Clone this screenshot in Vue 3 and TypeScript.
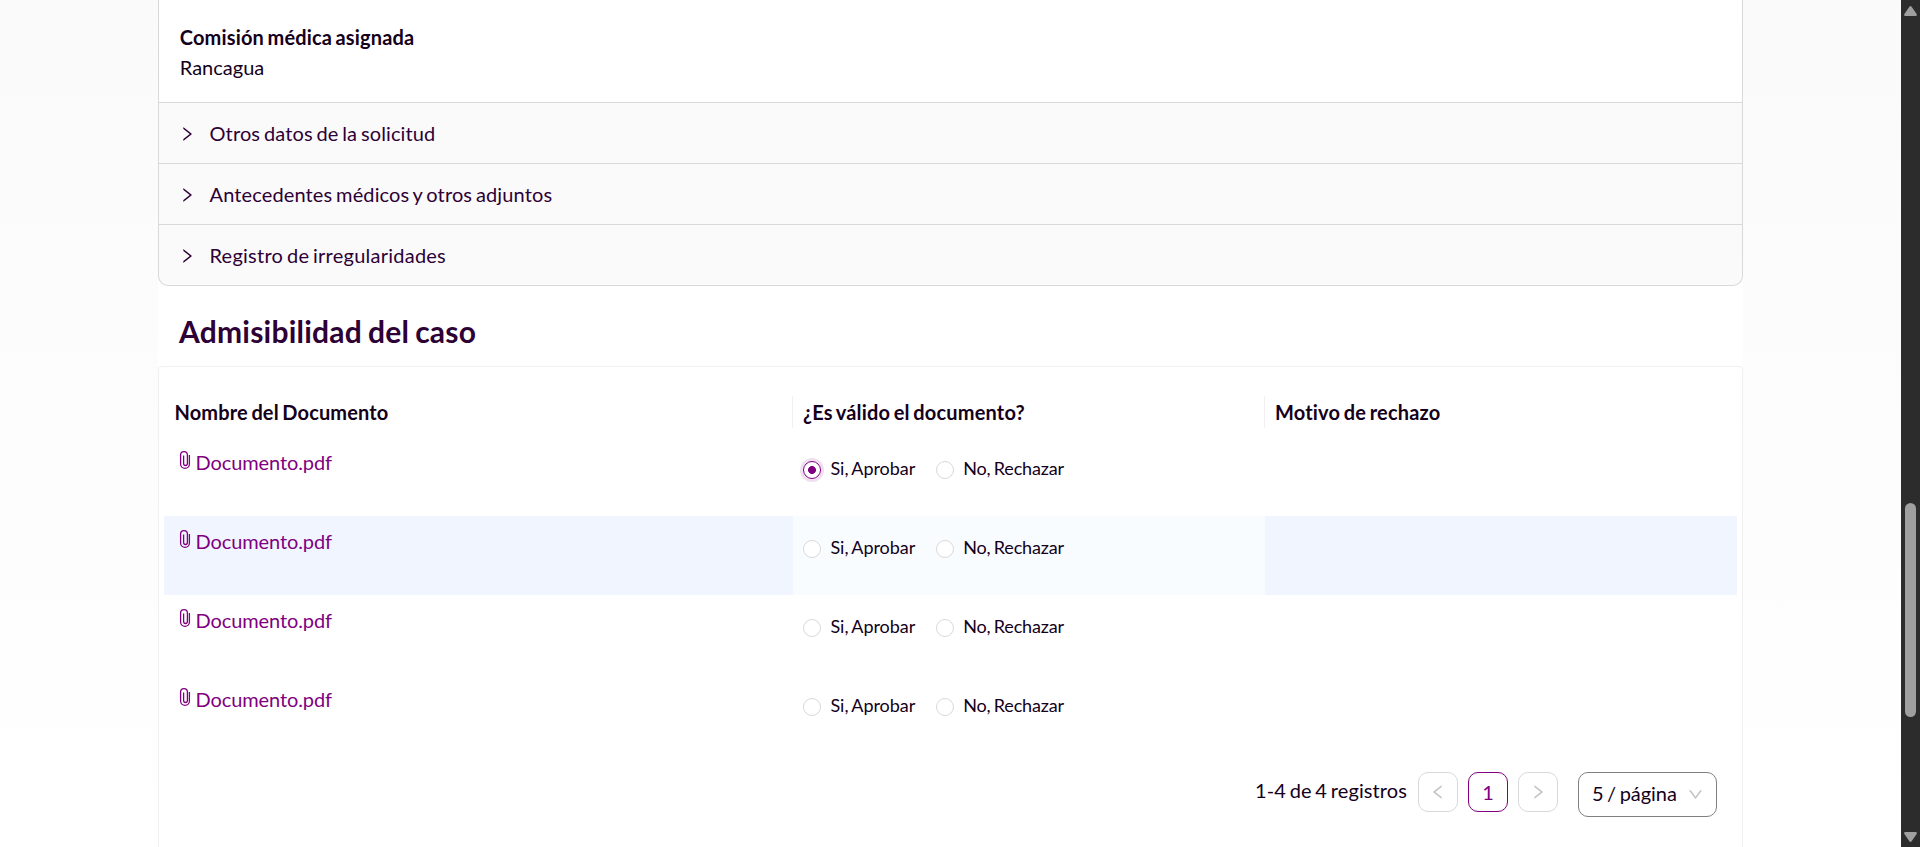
<script setup lang="ts">
import { ref } from 'vue'

interface Row { id: number; choice: string }

const sections: string[] = [
  'Otros datos de la solicitud',
  'Antecedentes médicos y otros adjuntos',
  'Registro de irregularidades',
]
const options: string[] = ['Si, Aprobar', 'No, Rechazar']
const highlighted = 2
const rows = ref<Row[]>([
  { id: 1, choice: 'Si, Aprobar' },
  { id: 2, choice: '' },
  { id: 3, choice: '' },
  { id: 4, choice: '' },
])

const arrow =
  'M765.7 486.8L314.9 134.7A7.97 7.97 0 00302 141v77.3c0 4.9 2.3 9.6 6.1 12.6l360 281.1-360 281.1c-3.9 3-6.1 7.7-6.1 12.6V883c0 6.7 7.7 10.4 12.9 6.3l450.8-352.1a31.96 31.96 0 000-50.4z'
const down =
  'M884 256h-75c-5.1 0-9.9 2.5-12.9 6.6L512 654.2 227.9 262.6c-3-4.1-7.8-6.6-12.9-6.6h-75c-6.5 0-10.3 7.4-6.5 12.7l352.6 486.1c12.8 17.6 39 17.6 51.7 0l352.6-486.1c3.9-5.3.1-12.7-6.4-12.7z'
</script>

<template>
  <div class="page">
    <main class="content">
      <div class="collapse">
        <div class="panel">
          <strong>Comisión médica asignada</strong>
          <span>Rancagua</span>
        </div>
        <div v-for="s in sections" :key="s" class="section">
          <svg class="arrow" viewBox="0 0 1024 1024"><path :d="arrow" /></svg>
          <span>{{ s }}</span>
        </div>
      </div>

      <h2 class="title">Admisibilidad del caso</h2>

      <section class="card">
        <div class="grid head">
          <div class="th">Nombre del Documento</div>
          <div class="th">¿Es válido el documento?</div>
          <div class="th">Motivo de rechazo</div>
        </div>
        <div v-for="r in rows" :key="r.id" class="grid row" :class="{ active: r.id === highlighted }">
          <div class="doc">
            <svg class="clip" viewBox="0 0 10 18">
              <path d="M9.4 3.9V12.9a4.4 4.4 0 0 1-8.8 0V4a3.4 3.4 0 0 1 6.8 0v8.6a1.9 1.9 0 0 1-3.8 0V4.6" />
            </svg>
            <a>Documento.pdf</a>
          </div>
          <div class="choices">
            <label v-for="o in options" :key="o" class="choice" @click="r.choice = o">
              <i class="radio" :class="{ on: r.choice === o }"></i>
              <span>{{ o }}</span>
            </label>
          </div>
          <div class="reason"></div>
        </div>

        <footer class="pager">
          <span class="total">1-4 de 4 registros</span>
          <button class="pg"><svg class="arrow flip" viewBox="0 0 1024 1024"><path :d="arrow" /></svg></button>
          <button class="pg current">1</button>
          <button class="pg"><svg class="arrow" viewBox="0 0 1024 1024"><path :d="arrow" /></svg></button>
          <div class="size">
            <span>5 / página</span>
            <svg class="down" viewBox="0 0 1024 1024"><path :d="down" /></svg>
          </div>
        </footer>
      </section>
    </main>

    <aside class="scrollbar">
      <svg class="tri" viewBox="0 0 13 10"><path d="M5.2 1Q6.5-.8 7.8 1L12.6 8Q13.4 10 11.6 10H1.4Q-.4 10 .4 8Z" /></svg>
      <div class="thumb"></div>
      <svg class="tri" viewBox="0 0 13 10"><path d="M5.2 9Q6.5 10.8 7.8 9L12.6 2Q13.4 0 11.6 0H1.4Q-.4 0 .4 2Z" /></svg>
    </aside>
  </div>
</template>

<style>
body { margin: 0; overflow: hidden; }
</style>

<style scoped>
* { box-sizing: border-box; }
.page {
  display: flex;
  height: 847px;
  overflow: hidden;
  background: linear-gradient(#fafafa, #fff);
  color: #14001a;
  font: 20px/30px Lato, sans-serif;
  word-spacing: -1.5px;
}
.content { width: 1585px; margin-left: 158px; background: #fff; }
.collapse {
  height: 286px;
  border: 1px solid #d9d9d9;
  border-top: 0;
  border-radius: 0 0 10px 10px;
  background: #fafafa;
  overflow: hidden;
}
.panel {
  display: flex;
  flex-direction: column;
  height: 102px;
  padding: 22px 21px 0 20.8px;
  background: #fff;
}
.panel strong { font-weight: 700; letter-spacing: 0.15px; }
.section {
  display: flex;
  align-items: center;
  gap: 14px;
  height: 61px;
  padding-left: 18.5px;
  border-top: 1px solid #d9d9d9;
  color: #2d0036;
  letter-spacing: 0.13px;
}
.section:last-child { letter-spacing: 0.24px; }
.section .arrow { margin-top: 2px; }
.arrow { width: 18px; height: 18px; fill: currentColor; }
.flip { transform: scaleX(-1); }
.title {
  height: 80px;
  margin: 0;
  padding: 25px 0 0 21px;
  font-size: 30px;
  line-height: 40px;
  font-weight: 700;
  letter-spacing: 0.22px;
  color: #2d0036;
}
.card {
  height: 520px;
  padding: 29px 5px 0;
  border: 1px solid #f0f0f0;
  border-radius: 4px;
}
.grid { display: grid; grid-template-columns: 629px 472px 472px; }
.head { height: 41px; font-weight: 700; letter-spacing: 0.18px; }
.th { height: 32px; padding-left: 10px; line-height: 32px; }
.th:first-child { padding-left: 10.5px; letter-spacing: 0.14px; }
.th:not(:last-child) { border-right: 1px solid #f0f0f0; }
.row { height: 79px; }
.doc { display: flex; padding: 10px 0 0 16px; color: #800080; }
.doc a { letter-spacing: -0.1px; }
.clip { width: 10px; height: 18px; margin: 4px 5.5px 0 0; fill: none; stroke: currentColor; stroke-width: 1.3; overflow: visible; }
.choices { display: flex; gap: 20.5px; padding: 19px 0 0 10px; font-size: 18px; line-height: 24px; word-spacing: -1px; }
.choice { display: flex; gap: 9.5px; height: 24px; letter-spacing: -0.06px; }
.choice:last-child { letter-spacing: -0.18px; }
.radio { width: 18px; height: 18px; margin-top: 5px; border: 1px solid #d9d9d9; border-radius: 50%; background: #fff; }
.radio.on {
  border-color: #800080;
  background: radial-gradient(circle, #800080 3.6px, #fff 4.3px);
  box-shadow: 0 0 0 3px #efdfef;
}
.active { background: #f0f5ff; }
.active .choices { background: #f8fcff; }
.pager { display: flex; justify-content: flex-end; padding: 19px 20px 0 0; }
.total { margin-right: 11px; line-height: 36px; letter-spacing: 0.1px; }
.pg {
  display: flex;
  align-items: center;
  justify-content: center;
  width: 40px;
  height: 40px;
  margin-right: 10px;
  padding: 0;
  border: 1px solid #d9d9d9;
  border-radius: 10px;
  background: #fff;
  color: #bfbfbf;
  font: inherit;
}
.current { border-color: #800080; color: #800080; }
.size {
  display: flex;
  align-items: center;
  justify-content: space-between;
  width: 139px;
  height: 45px;
  margin-left: 10px;
  padding: 0 12.5px 0 13px;
  border: 1px solid #808080;
  border-radius: 10px;
}
.size span { padding-bottom: 3px; letter-spacing: -0.05px; }
.down { width: 17px; height: 17px; fill: #bfbfbf; }
.scrollbar {
  display: flex;
  flex-direction: column;
  align-items: center;
  width: 19px;
  height: 847px;
  margin-left: auto;
  padding: 6px 0 5px;
  background: #2c2c2c;
}
.tri { width: 13px; height: 10px; fill: #9f9f9f; }
.thumb { width: 11px; height: 214px; margin: 487px 0 115px; border-radius: 6px; background: #9f9f9f; }
</style>
